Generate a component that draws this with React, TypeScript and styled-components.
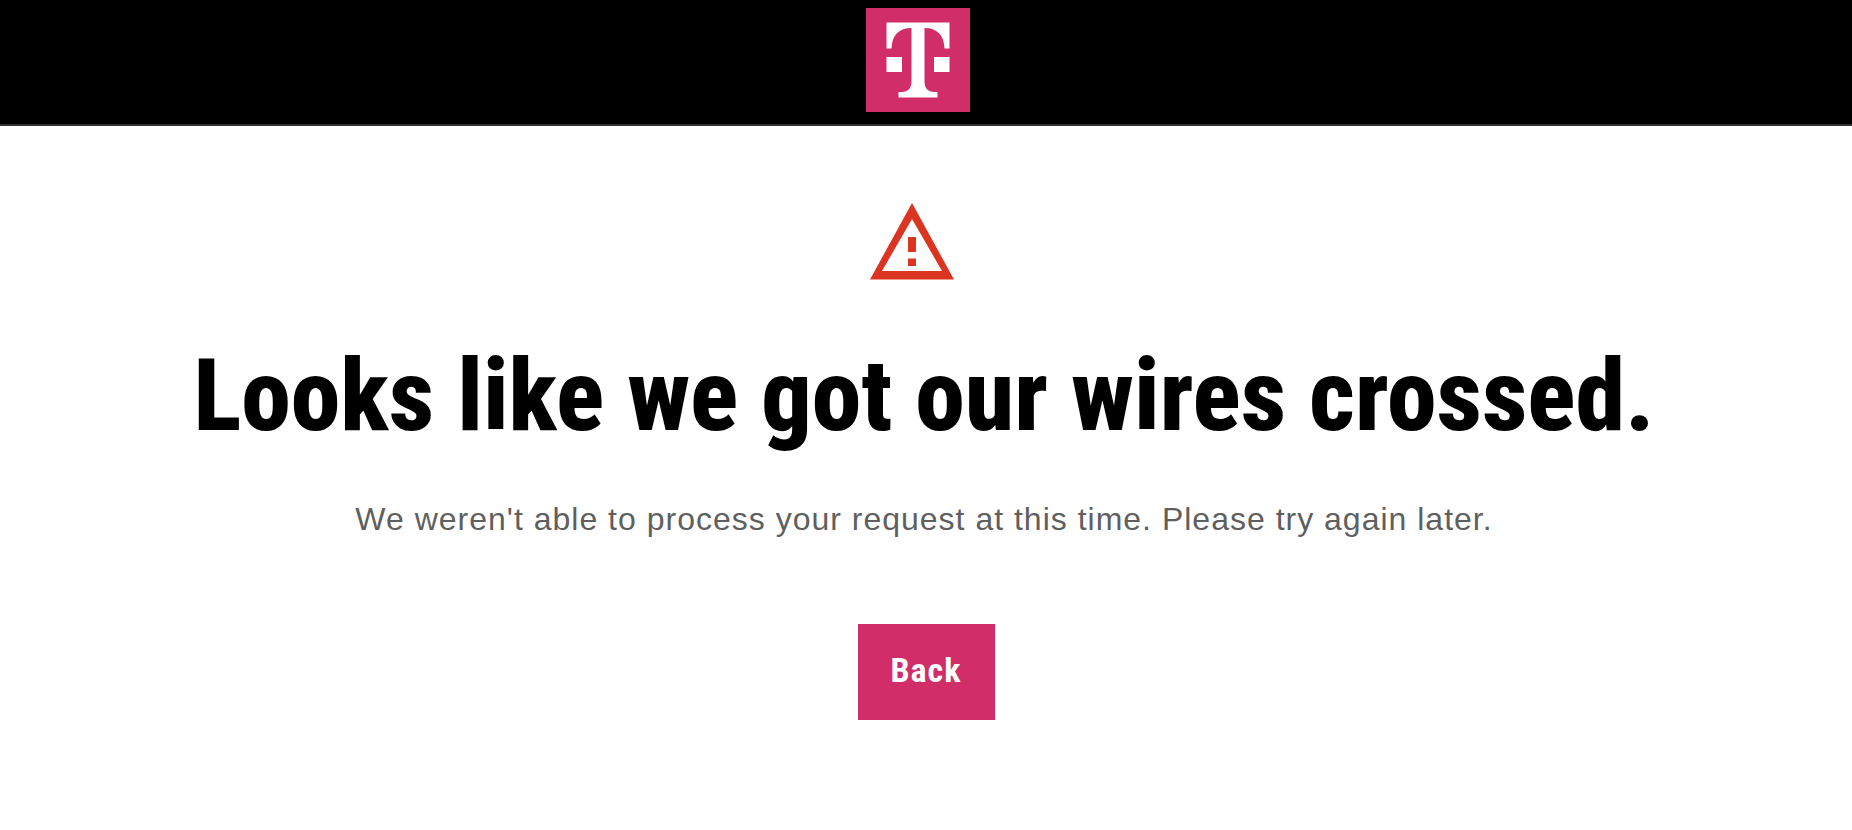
import styled, { createGlobalStyle } from "styled-components";

const GlobalStyle = createGlobalStyle`
  * { box-sizing: border-box; }
  body { margin: 0; background: #fff; color: #000; }
`;

const Header = styled.header`
  display: flex;
  justify-content: center;
  padding: 8px 16px 12px 0;
  background: #000;
  border-bottom: 2px solid #333;
`;

const HomeLink = styled.a`
  display: block;
  width: 104px;
  height: 104px;
`;

const Main = styled.main`
  display: flex;
  flex-direction: column;
  align-items: center;
  padding: 76px 16px 40px;
  text-align: center;
`;

const Warning = styled.svg`
  display: block;
  width: 84px;
  height: 78px;
  margin-right: 28px;
`;

const Title = styled.h1`
  margin: 56px 4px 0 0;
  font: 800 100px/120px "Roboto Condensed", Roboto, sans-serif;
`;

const Message = styled.p`
  margin: 43px 4px 0 0;
  color: #5f5f5f;
  font: 32px/40px "Liberation Sans", Arial, sans-serif;
  letter-spacing: 1px;
`;

const BackButton = styled.button`
  margin-top: 85px;
  padding: 22px 33px 26px;
  border: 0;
  background: #d12d68;
  color: #fff;
  font: bold 34px/48px "Roboto Condensed", Roboto, sans-serif;
  letter-spacing: 1px;
  cursor: pointer;
`;

export default function App() {
  return (
    <>
      <GlobalStyle />
      <Header>
        <HomeLink href="#" aria-label="T-Mobile">
          <svg width="104" height="104" viewBox="0 0 104 104" aria-hidden="true">
            <rect width="104" height="104" fill="#d12d68" />
            <path
              fill="#fff"
              d="M20.500 14.500h63v26h-5C78 27 71 20 58.500 20v53c0 7 3 11 10 11h3v5.500H32.500v-5.500h3c7 0 10-4 10-11V20C33 20 26 27 25.500 40.500h-5zM20.500 49h15.500v15h-15.500zM68 49h15.500v15H68z"
            />
          </svg>
        </HomeLink>
      </Header>
      <Main>
        <Warning viewBox="0 0 84 78" aria-hidden="true">
          <path
            fill="#db3521"
            fillRule="evenodd"
            d="M42 1L84 77.500H0zM42 17L12 69H72zM38 35h8v15h-8zM38 56.500h8v7.500h-8z"
          />
        </Warning>
        <Title>Looks like we got our wires crossed.</Title>
        <Message>
          We weren't able to process your request at this time. Please try again later.
        </Message>
        <BackButton type="button">Back</BackButton>
      </Main>
    </>
  );
}
